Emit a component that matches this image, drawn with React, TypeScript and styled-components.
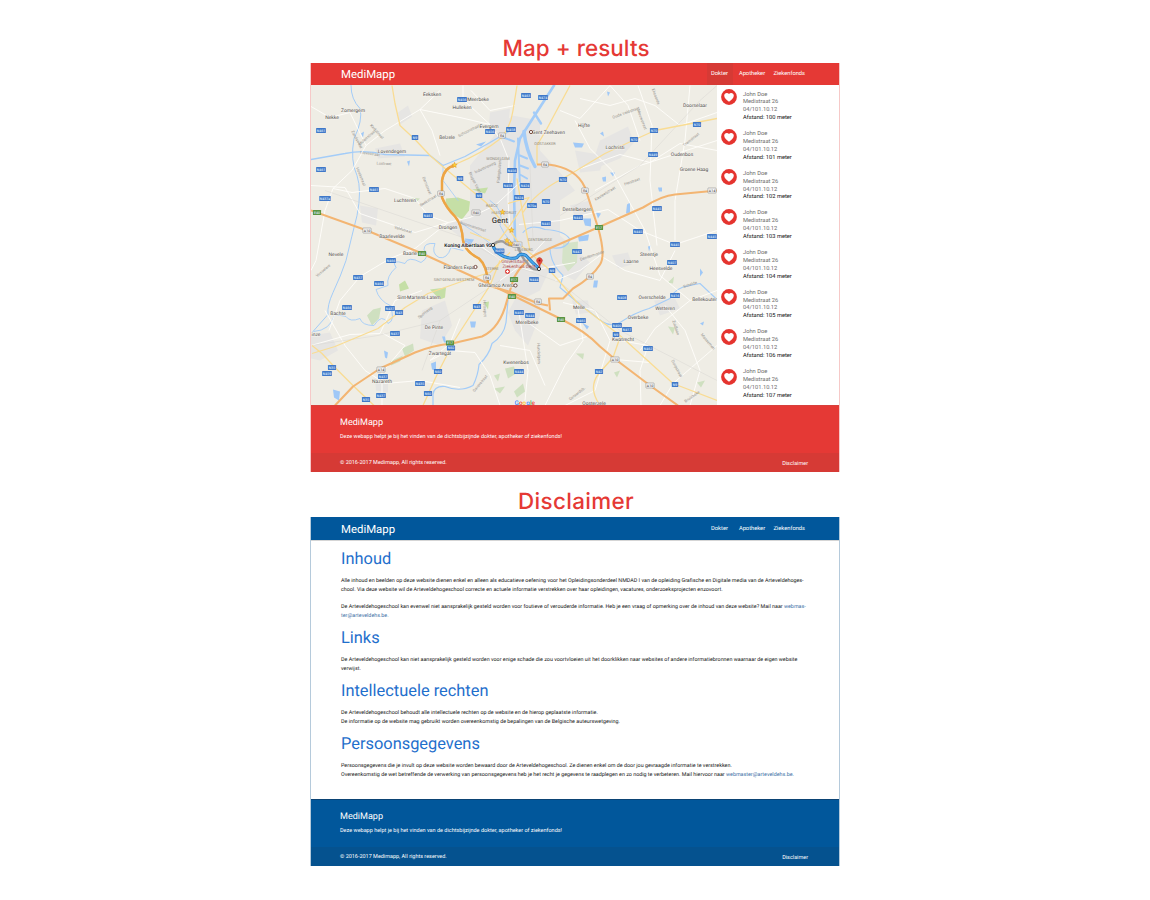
import React from "react";
import styled, { createGlobalStyle, css } from "styled-components";

const Global = createGlobalStyle`
  * { box-sizing: border-box; }
  body { margin: 0; background: #fff; font-family: Roboto, sans-serif; text-rendering: geometricPrecision; }
  h1, h2, h3, p { margin: 0; font-weight: 400; }
`;

const Page = styled.main`
  width: 1150px;
  height: 900px;
  padding: 31px 311px 0;
  overflow: hidden;
`;

const ScreenTitle = styled.h1<{ $tracking: number }>`
  height: 32px;
  padding: 1.5px 0 0 2px;
  text-align: center;
  font: 500 22.4px/32px Inter, sans-serif;
  letter-spacing: ${(p) => p.$tracking}px;
  color: #e53935;
`;

type Tone = "red" | "blue";
const tones = {
  red: { main: "#e53935", dark: "#d63a35", edge: "#f6c9c8" },
  blue: { main: "#01579b", dark: "#05528f", edge: "#b5cadb" },
};

const Screen = styled.section<{ $tone: Tone }>`
  width: 530px;
  margin: 0 0 13px -1px;
  border: 1px solid ${(p) => tones[p.$tone].edge};
  border-top: 0;
  border-bottom: 0;
  display: flex;
  flex-direction: column;
`;

const Header = styled.header<{ $tone: Tone }>`
  height: ${(p) => (p.$tone === "red" ? 21.5 : 23)}px;
  padding: 0 32px 0 30px;
  background: ${(p) => tones[p.$tone].main};
  color: #fff;
  display: flex;
  justify-content: space-between;
  align-items: stretch;
`;

const Brand = styled.span`
  font-size: 11.4px;
  align-self: center;
  padding-top: 1px;
`;

const Nav = styled.nav`
  display: flex;
`;

const NavItem = styled.a<{ $active?: boolean; $width: number }>`
  width: ${(p) => p.$width}px;
  padding-top: 1.4px;
  display: flex;
  align-items: center;
  justify-content: center;
  font-size: 5.75px;
  ${(p) => p.$active && css`background: #d63a35;`}
`;

const MapBody = styled.div`
  height: 320.5px;
  display: flex;
`;

const MapSvg = styled.svg`
  width: 406px;
  height: 320.5px;
  display: block;
  font-family: Roboto, sans-serif;
`;

const Results = styled.aside`
  flex: 1;
  display: flex;
  gap: 6px;
  padding-left: 4px;
`;

const Icons = styled.div`
  display: flex;
  flex-direction: column;
  gap: 24px;
  padding-top: 4.5px;
  svg { width: 16px; height: 16px; display: block; }
`;

const People = styled.ul`
  list-style: none;
  margin: 0;
  padding: 7px 0 0;
  display: flex;
  flex-direction: column;
  gap: 8.3px;
`;

const Person = styled.li`
  height: 31.36px;
  font-size: 5.72px;
  line-height: 7.84px;
  color: #6b6b6b;
  strong { font-weight: 400; color: #111; }
`;

const Footer = styled.footer<{ $tone: Tone }>`
  height: ${(p) => (p.$tone === "red" ? 66.5 : 67)}px;
  background: ${(p) => tones[p.$tone].main};
  color: #fff;
  display: flex;
  flex-direction: column;
  justify-content: space-between;
  border-top: 1px solid ${(p) => (p.$tone === "red" ? "#d8403c" : "#0b4374")};
`;

const FooterIntro = styled.div`
  padding: 11px 29px 0;
  h3 { font-size: 9.05px; line-height: 12px; }
  p { font-size: 5.5px; line-height: 8px; margin-top: 4px; }
`;

const FooterBar = styled.div<{ $tone: Tone }>`
  height: 18.5px;
  padding: 1px 31px 0 29px;
  background: ${(p) => tones[p.$tone].dark};
  display: flex;
  justify-content: space-between;
  align-items: center;
  font-size: 5.47px;
  a { padding-top: 3px; }
`;

const Article = styled.article`
  height: 259px;
  padding: 9.2px 30px 0;
  border-top: 1px solid #d5d5d5;
  h2 { font-size: 16.4px; line-height: 20px; color: #1f6fcc; }
  p { font-size: 5.365px; line-height: 8.8px; color: #151515; white-space: nowrap; margin-top: 7.1px; }
  p + h2 { margin-top: 8.3px; }
  p + p { margin-top: 8.8px; }
  a { color: #3a6ea5; }
`;

type Kind = "b" | "g" | "w";
const shields: [number, number, string, Kind?][] = [
  [462, 99, "N456"], [526, 95, "N463"], [543, 97, "N474"], [321, 130, "N461"], [415, 137, "N9"],
  [490, 131, "N456"], [511, 129, "N458"], [502, 135, "R4", "w"], [545, 164, "R4", "w"], [321, 169, "N461"],
  [460, 178, "N9"], [512, 170, "N456"], [525, 185, "N424"], [508, 185, "N458"], [563, 179, "N70"],
  [374, 189, "N461"], [654, 130, "N70"], [697, 124, "N70"], [634, 139, "N70"], [653, 154, "N449"],
  [712, 190, "A14", "w"], [325, 198, "N437a"], [317, 212, "E40", "g"], [367, 230, "A10", "w"],
  [441, 193, "R4", "w"], [479, 195, "N9"], [476, 212, "R40", "w"], [428, 215, "N461"], [422, 253, "E40", "g"],
  [391, 260, "N466"], [358, 277, "N437"], [379, 283, "N466"], [487, 277, "R4", "w"], [519, 197, "N424"],
  [532, 205, "N70a"], [546, 201, "N70"], [546, 223, "N445"], [578, 217, "N445"], [585, 190, "R4", "w"],
  [599, 227, "E17", "g"], [657, 208, "N445"], [638, 231, "N445"], [675, 244, "N445"], [672, 262, "N407"],
  [577, 251, "N447"], [552, 270, "N9"], [534, 279, "N444"], [590, 276, "R4", "w"],
  [514, 279, "E17", "g"], [712, 236, "N445"], [347, 307, "N466"], [390, 308, "N437"], [399, 312, "N43"],
  [395, 333, "N437"], [477, 306, "N43"], [450, 342.5, "E17", "g"], [451, 347.5, "N60"], [332, 367, "N35"],
  [327, 373, "N459"], [381, 369, "A14", "w"], [383, 376, "N437"], [420, 383, "N435"], [438, 371, "N60"],
  [428, 393, "N60"], [381, 395, "N437"], [366, 399, "N35"], [512, 296, "E40", "g"], [519, 312, "N465"],
  [530, 315, "N444"], [538, 301, "R4", "w"], [561, 319, "E40", "g"], [581, 320, "N465"], [622, 297, "N408"],
  [675, 295, "N416"], [617, 325, "N400"], [627, 329, "N417"], [616, 334, "N9"], [648, 348, "N462"],
  [615, 359, "A10", "w"], [599, 371, "N42"], [650, 385, "A10", "w"], [675, 384, "N9"], [519, 371, "N444"],
];

const towns: [number, number, string][] = [
  [432, 94, "Eeksken"], [478, 99, "Meerbeke"], [462, 107, "Hulleken"], [353, 110, "Zomergem"], [332, 117, "Nekke"],
  [489, 125.5, "Evergem"], [447, 136.5, "Belzele"], [392, 150.5, "Lovendegem"], [548.5, 131.5, "Gent Zeehaven"],
  [695, 104.5, "Doorselaar"], [584, 124.5, "Hijfte"], [615, 146.5, "Lochristi"], [682, 154, "Oudenbos"], [694, 169, "Groene Haag"],
  [405, 200, "Luchteren"], [448, 227, "Drongen"], [392, 235.5, "Baarlevelde"], [410, 252.5, "Baarle"],
  [336, 254, "Nevele"], [459, 266.5, "Flanders Expo"], [496.5, 285, "Ghelamco Arena"], [577, 209, "Destelbergen"],
  [649, 254, "Steentje"], [631, 261, "Laarne"], [661, 268, "Heesvelde"], [338, 313, "Bachte"],
  [419, 297, "Sint-Martens-Latem"], [434, 326.5, "De Pinte"], [316, 333.5, "inze"], [440, 352.5, "Zwartegat"],
  [382, 380.5, "Nazareth"], [579, 306.5, "Melle"], [527, 321.5, "Merelbeke"], [652, 296.5, "Overschelde"], [665, 307.5, "Wetteren"],
  [704.5, 299, "Bellekouter"], [638, 317, "Overbeke"], [623, 339, "Kwatrecht"], [516, 362, "Kwenenbos"], [594, 402.4, "Oosterzele"],
];

const streets: [number, number, string, number][] = [
  [367, 137, "Molenstraat", -42], [357, 139, "Zandstraat", 62], [377, 131, "Kerkstraat", 48], [370, 153, "Lievestraat", 8],
  [384, 163, "Lostraat", 3], [361, 176, "Hoekstraat", 68], [469, 130, "Schoonstraat", -27], [485, 167, "Industrieweg", -25],
  [499, 171, "Palinghuizen", -86], [475, 182, "Brugse Vaart", 64], [427, 185, "Damstraat", 68], [428, 200, "Beekstraat", -32],
  [403, 229, "Veldstraat", 17], [473, 226, "Noormanstraat", 18], [626, 112, "Oude Veldstraat", -20], [642, 119, "Nieuwstraat", 70],
  [691, 139, "Tramstraat", -39], [632, 181, "Heistraat", -20], [605, 193, "Kasteelstraat", -32], [323, 270, "Vosselare", -40],
  [425, 312, "Sportweg", -38], [485, 308, "Hutsepot", 88], [480, 383, "Gaverstraat", -50], [539, 353, "Hundelgem", 88],
  [676, 327, "Zuidlaan", 72], [708, 341, "Massemen", 50], [677, 368, "Dorpstraat", 62], [577, 393, "Geraardsb.", -38],
  [692, 396, "Bruisbeke", -35], [592, 255, "Dendermonde", -18], [656, 96, "Eksaarde", 70], [690, 284, "Schelde", -18],
];

const districts: [number, number, string][] = [
  [498, 158, "WONDELGEM"], [545, 143, "OOSTAKKER"], [492, 205, "RABOT"], [504, 212, "HUIS VOORUIT"], [540, 239, "GENTBRUGGE"],
  [492, 268, "STERRE"], [454, 279, "SINT-DENIJS-WESTREM"], [524, 249, "LEDEBERG"],
];

const minorRoads = [
  "M311 106 L330 117 L350 112 L366 145 L352 170 L333 188 L325 210 L316 260 L311 270",
  "M366 145 L385 130 L420 109 L440 90 M420 109 L432 130 L440 155",
  "M333 188 L352 192 L385 188 L415 198 L428 215 L448 222 L470 217 L495 205 L520 182",
  "M448 222 L415 248 L390 258 L360 276 L340 300 L329 330",
  "M463 85 L463 99 L490 124 L501 140 L509 160 L508 200 L510 230",
  "M311 185 L345 187 L360 213 L415 232 L448 222",
  "M311 345 L350 334 L380 333 L395 300 L422 290",
  "M325 310 L345 345 L365 370 L385 383 L420 380 L460 387",
  "M383 333 L405 345 L382 372 L382 405 M430 360 L450 350 L475 352 L490 375 L500 405",
  "M580 98 L610 105 L635 98 L655 105 L680 125 L717 112",
  "M575 170 L620 154 L650 162 L680 143 L717 150",
  "M575 120 L590 148 L612 170 L645 230 L660 275 L690 300",
  "M638 85 L652 125 L650 180 L657 245",
  "M610 85 L628 105 L640 140 M690 85 L685 140 L675 200 L675 240",
  "M519 224 L560 220 L608 209 L640 230 L675 244 L708 233 L717 230",
  "M555 280 L580 270 L600 255 L625 270 L660 280 L675 250",
  "M563 302 L595 310 L610 340 L595 390 L565 405",
  "M577 302 L583 340 L565 365 L545 405 M519 312 L528 370 L525 400",
  "M620 340 L648 345 L640 370 L641 405 M665 305 L685 330 L700 370 L690 405",
  "M640 350 L655 328 L690 300 L717 290 M673 383 L717 345",
  "M500 345 L530 350 L545 385 M460 318 L450 343 L430 360",
  "M615 359 L650 362 L673 383 L660 405 M525 320 L560 345 L590 335",
  "M471 90 L490 110 L515 105 M420 109 L460 117 L490 124",
  "M480 245 L505 263 L530 270 L575 262 M500 280 L525 262 L545 240",
  "M595 190 L640 165 L717 140 M560 110 L580 118 L610 85",
];

const yellowRoads = [
  "M392 85 L395 103 L400 125 L415 139 L430 155 L445 168 L486 202 L508 228",
  "M455 164 Q482 153 502 137 Q511 125 513 110 L517 85",
  "M570 85 L547 128 L537 145 L537 164 M508 203 L529 197 L508 228",
  "M523 212 Q535 192 563 178 L605 153 L635 139 L655 130 L717 118",
  "M312 353 L335 346 L378 328 L405 307 L428 293 L470 278 L490 272 L510 252",
  "M312 345 L322 353 L335 367 L353 385 L374 405",
  "M423 405 L438 372 L455 339 L477 305 L490 285 L500 260",
  "M508 228 L520 244 L548 268 L563 285 L577 302 L620 335 L673 383 L717 400",
  "M620 337 L613 357 L598 374 Q588 388 600 405",
  "M508 228 L495 245 M517 178 L523 215 L530 250 M470 232 L490 240",
];

const orangeRoads = [
  "M455 165 Q444 167 442 180 L442 197 Q446 207 455 216 Q462 224 463 240 Q465 251 479 258 Q487 265 488 283",
  "M311 210 L367 230 L422 253 L488 283 L517 297 L560 318 Q586 331 600 346 L613 357 L650 385 L678 405",
  "M335 405 L353 386 L380 368 L415 352 Q432 345 452 343 L482 336 Q500 328 507 300 L514 277 Q525 258 540 252 L598 227 L643 207 Q662 195 675 194 L717 190",
  "M537 164 L548 164 Q576 167 585 187 L598 227 Q606 255 600 264 Q592 277 573 288 L563 298 L549 298 L550 310",
  "M488 285 L512 292 L538 303 L548 305",
];

const Marker = ({ x, y, label, kind = "b" }: { x: number; y: number; label: string; kind?: Kind }) => {
  const w = label.length * 1.65 + 3.2;
  const fill = kind === "b" ? "#3f78c9" : kind === "g" ? "#5a9440" : "#fbfbfb";
  return (
    <g>
      <rect x={x - w / 2} y={y - 2.5} width={w} height={5} rx={0.5} fill={fill} stroke={kind === "w" ? "#8d8d8d" : "none"} strokeWidth={0.6} />
      <text x={x} y={y + 1.3} fontSize={3.5} fontWeight={500} textAnchor="middle" fill={kind === "w" ? "#555" : "#d8e5f8"}>{label}</text>
    </g>
  );
};

const Star = ({ x, y }: { x: number; y: number }) => (
  <path transform={`translate(${x} ${y})`} d="M0-2.7 .8-.8 2.7-.7 1.2.6 1.7 2.5 0 1.4-1.7 2.5-1.2.6-2.7-.7-.8-.8Z" fill="#fbd335" stroke="#dd8f26" strokeWidth={0.5} />
);

const Dot = ({ x, y, color }: { x: number; y: number; color: string }) => (
  <circle cx={x} cy={y} r={1.6} fill="#fff" stroke={color} strokeWidth={1} />
);

const CityMap = () => (
  <MapSvg viewBox="311 84.5 406 320.5" preserveAspectRatio="none">
    <rect x={311} y={84} width={406} height={322} fill="#efede5" />
    <g fill="#e6e5e3">
      <path d="M470 165 L500 128 L512 115 L540 120 L540 150 L560 172 L575 190 L560 200 L560 235 L590 262 L575 280 L550 268 L540 290 L520 300 L495 285 L480 262 L465 240 L445 225 L470 215 Z" />
      <path d="M517 295 L540 300 L540 315 L528 345 L515 330 L508 312Z" />
      <path d="M600 140 L628 126 L634 142 L620 158 L590 170Z M575 150 L605 155 L600 170 L580 172Z" />
      <path d="M398 112 L408 105 L412 116 L400 124Z M490 112 L510 108 L508 126 L488 134Z M375 148 L400 143 L405 156 L378 158Z" />
      <path d="M422 310 L445 300 L452 325 L440 345 L420 338Z M311 335 L330 332 L338 350 L320 360 L311 358Z" />
      <path d="M375 378 L388 378 L388 392 L376 390Z M654 300 L675 298 L680 308 L660 315Z M360 205 L378 208 L376 225 L362 222Z" />
      <path d="M572 300 L588 300 L590 312 L576 314Z M612 255 L628 252 L632 264 L618 268Z M570 205 L590 200 L592 212 L575 216Z" />
    </g>
    <g fill="#c5dfa6">
      <path d="M446 198 L458 197 L470 201 L469 210 L462 219 L452 213 L445 205Z" />
      <path d="M563 243 L578 241 L577 262 L568 271 L562 262Z" fill="#d5e3c8" />
      <path d="M373 309 L381 307 L379 318 L372 325 L367 315Z M402 348 L413 343 L414 350 L405 356Z" fill="#cfe0c0" />
      <path d="M399 284 L405 280 L409 288 L400 291Z M430 289 L446 287 L445 297 L440 299Z M472 189 L488 187 L485 193Z M484 302 L489 301 L488 309Z" />
      <path d="M390 361 L403 355 L400 361 L391 365Z M494 375 L500 373 L498 381Z M505 368 L514 366 L516 373 L508 378Z M494 388 L505 386 L500 393Z M514 391 L523 383 L525 391 L517 397Z" fill="#cfe0c0" />
      <path d="M668 326 L675 327 L673 334Z M576 353 L584 353 L583 359Z M614 372 L620 370 L617 377Z M411 197 L420 198 L417 201Z M668 282 L674 276 L673 283Z M697 382 L705 380 L701 387Z" fill="#cfe0c0" />
    </g>
    <g fill="none" stroke="#a3ccf8" strokeLinejoin="round" strokeLinecap="round">
      <path d="M351 85 Q351 99 360 108 Q363 120 354 138 Q350 160 357 175 Q362 190 357 215 Q352 235 346 260 Q341 275 333 292 Q327 305 328 314 L313 331" strokeWidth={1} />
      <path d="M311 159 L345 153 Q365 149 385 154 L430 155 L443 165 L465 156 L490 142 L512 129" strokeWidth={1.3} />
      <path d="M554 85 L534 116 L520 138 L515 160 L514 190 L515 240" strokeWidth={2.6} />
      <path d="M524 131 Q526 150 535 166" strokeWidth={3.4} />
      <path d="M534 112 L541 123" strokeWidth={2.4} />
      <path d="M518 138 L520 185 M520 155 L527 158 M520 165 L528 168 M520 174 L527 178 M501 136 L514 141" strokeWidth={2} />
      <path d="M443 165 L443 180 L458 200 M460 222 L480 235 L490 243" strokeWidth={0.8} />
      <path d="M463 250 L451 247 Q447 259 439 257 Q431 253 435 243 Q424 242 424 249 Q431 256 421 262 Q408 255 405 263 Q390 258 396 267 Q386 276 388 285 L376 289 Q379 300 390 305" strokeWidth={0.9} />
      <path d="M390 305 Q396 320 388 323 Q382 312 374 325 Q362 325 360 318 Q350 322 346 316 L335 314 Q330 330 314 331" strokeWidth={0.9} />
      <path d="M433 405 L433 394 Q434 385 445 386 Q460 392 473 385 Q478 375 479 364 Q489 355 492 343 Q504 335 506 322 L508 300" strokeWidth={1.2} />
      <path d="M523 232 Q530 223 545 229 Q565 230 570 239 Q566 250 550 247 Q550 263 563 275 L560 287 L574 299 L602 321 Q612 327 620 322 Q635 312 649 308 L670 298 Q675 287 690 285 L700 283 L717 299" strokeWidth={1.1} />
      <path d="M520 248 Q508 242 500 225 Q505 210 490 200" strokeWidth={0.9} />
    </g>
    <g fill="#9fc8f7">
      <path d="M361 133 L364 131 L363 137Z M407 161 L410 160 L409 166Z M573 142 L584 143 L582 147 L575 147Z M600 133 L603 131 L604 136Z" />
      <path d="M578 236 L589 234 L588 240 L579 241Z M583 218 L591 218 L591 226 L585 225Z M596 212 L601 213 L598 218Z M627 204 L630 202 L630 212 L626 213Z M602 177 L606 176 L606 181 L603 181Z M658 187 L662 187 L662 191 L659 191Z" />
      <path d="M594 280 L598 280 L597 287 L593 287Z M582 322 L589 326 L587 329Z M648 246 L651 245 L649 251Z M470 321 L476 321 L475 327 L471 327Z M442 336 L445 336 L446 342 L444 342Z" />
      <path d="M333 389 L340 391 L339 400 L334 397Z M384 350 L388 352 L387 358 L385 357Z M431 363 L436 361 L436 370 L432 369Z M610 172 L615 172 L613 176Z M465 238 L474 239 L470 245 L464 243Z" />
      <path d="M700 268 L703 272 L700 276Z M700 323 L704 321 L703 325Z M607 91 L610 92 L608 96Z M476 144 L486 141 L481 146Z" />
    </g>
    <g fill="none" stroke="#fffefa" strokeWidth={0.9} strokeLinejoin="round">{minorRoads.map((d) => <path key={d} d={d} />)}</g>
    <g fill="none" stroke="#d9d7d2" strokeWidth={0.5}>
      <path d="M325 190 L460 236 L505 262 L560 282 L620 330 L717 380 M311 345 L378 335 L440 320 L500 280 M440 320 L422 370" />
      <path d="M717 85 L700 100 L640 165 L560 215 M530 165 L533 240" />
    </g>
    <g fill="none" stroke="#f9dc93" strokeWidth={1.3} strokeLinejoin="round">{yellowRoads.map((d) => <path key={d} d={d} />)}</g>
    <g fill="none" stroke="#f3b572" strokeWidth={2.1} strokeLinejoin="round">{orangeRoads.map((d) => <path key={d} d={d} />)}</g>
    <path d={orangeRoads[0]} fill="none" stroke="#eda544" strokeWidth={2.4} />
    <g fontSize={4} fill="#96938e" textAnchor="middle">
      {streets.map(([x, y, t, r]) => <text key={`${x}-${y}`} transform={`translate(${x} ${y}) rotate(${r})`} y={1.4}>{t}</text>)}
    </g>
    <g fontSize={3.8} fill="#8d8578" textAnchor="middle">
      {districts.map(([x, y, t]) => <text key={t} x={x} y={y + 1.4}>{t}</text>)}
    </g>
    <g fontSize={4.95} fill="#4f4d4a" textAnchor="middle" stroke="#f6f4ef" strokeWidth={0.8} paintOrder="stroke">
      {towns.map(([x, y, t]) => <text key={t} x={x} y={y + 1.7}>{t}</text>)}
      <text x={500} y={222.3} fontSize={7.8} fill="#3c3c3c" fontWeight={500}>Gent</text>
    </g>
    {shields.map(([x, y, l, k]) => <Marker key={`${x}-${y}`} x={x} y={y} label={l} kind={k} />)}
    <g fill="none" strokeLinejoin="round" strokeLinecap="round">
      <path d="M493 244 Q498 240 503 241 Q508 246 518 246 Q522 258 527 262 Q531 270 538 269" stroke="#9d9d9d" strokeWidth={2.4} />
      <path d="M493 245 Q495 252 504 256 Q512 259 517 257 Q520 252 526 255 Q532 262 539 268" stroke="#1d74bf" strokeWidth={3.1} />
      <path d="M493 245 Q495 252 504 256 Q512 259 517 257 Q520 252 526 255 Q532 262 539 268" stroke="#4aa7ec" strokeWidth={1.8} strokeDasharray="3 1.2" />
    </g>
    <Marker x={517} y={244} label="R401" kind="w" />
    <text x={468} y={246.2} fontSize={5} fontWeight={700} fill="#222" textAnchor="middle" stroke="#fff" strokeWidth={0.8} paintOrder="stroke">Koning Albertlaan 95</text>
    <Marker x={499.5} y={250.5} label="N430" />
    <g fontSize={4.6} fill="#ae4b4b" textAnchor="middle">
      <text x={513} y={262}>Universitair</text>
      <text x={519} y={267}>Ziekenhuis Gent</text>
    </g>
    <Dot x={493} y={244.5} color="#333" />
    <Dot x={539} y={268.5} color="#333" />
    <Dot x={531} y={131.5} color="#73483f" />
    <Dot x={475.5} y={266.5} color="#73483f" />
    <Dot x={515.5} y={285} color="#73483f" />
    <circle cx={507.5} cy={271} r={2.5} fill="#e04a45" />
    <path d="M506 271h3M507.5 269.5v3" stroke="#fff" strokeWidth={0.9} />
    <path d="M539.5 267 Q539 264 537.2 261.8 A2.9 2.9 0 1 1 541.8 261.8 Q540 264 539.5 267Z" fill="#e3463c" stroke="#a52714" strokeWidth={0.4} />
    <circle cx={539.5} cy={260} r={0.9} fill="#7d1512" />
    <Star x={454.5} y={164.5} /><Star x={502.5} y={211.5} /><Star x={511.5} y={229.5} /><Star x={507} y={240} /><Star x={510.5} y={243} />
    <text x={514.5} y={404.2} fontSize={6.4} fontWeight={500} stroke="#fff" strokeWidth={0.4} paintOrder="stroke" textLength={20.5}><tspan fill="#4285f4">G</tspan><tspan fill="#ea4335">o</tspan><tspan fill="#fbbc05">o</tspan><tspan fill="#4285f4">g</tspan><tspan fill="#34a853">l</tspan><tspan fill="#ea4335">e</tspan></text>
  </MapSvg>
);

const HeartBadge = () => (
  <svg viewBox="0 0 16 16">
    <circle cx={8} cy={8} r={7.9} fill="#e5342f" />
    <path d="M8 12.8 C5.2 10.6 3.2 9 3.2 6.6 C3.2 5 4.4 3.9 5.8 3.9 C6.7 3.9 7.5 4.3 8 5.1 C8.5 4.3 9.3 3.9 10.2 3.9 C11.6 3.9 12.8 5 12.8 6.6 C12.8 9 10.8 10.6 8 12.8Z" fill="#fff" />
  </svg>
);

const TopBar = ({ tone }: { tone: Tone }) => (
  <Header $tone={tone}>
    <Brand>MediMapp</Brand>
    <Nav>
      <NavItem $active={tone === "red"} $width={26}>Dokter</NavItem>
      <NavItem $width={39}>Apotheker</NavItem>
      <NavItem $width={35.5}>Ziekenfonds</NavItem>
    </Nav>
  </Header>
);

const BottomBar = ({ tone }: { tone: Tone }) => (
  <Footer $tone={tone}>
    <FooterIntro>
      <h3>MediMapp</h3>
      <p>Deze webapp helpt je bij het vinden van de dichtsbijzijnde dokter, apotheker of ziekenfonds!</p>
    </FooterIntro>
    <FooterBar $tone={tone}>
      <span>© 2016-2017 Medimapp, All rights reserved.</span>
      <a>Disclaimer</a>
    </FooterBar>
  </Footer>
);

const distances = [100, 101, 102, 103, 104, 105, 106, 107];

export default function App() {
  return (
    <>
      <Global />
      <Page>
        <ScreenTitle $tracking={0.06}>Map + results</ScreenTitle>
        <Screen $tone="red">
          <TopBar tone="red" />
          <MapBody>
            <CityMap />
            <Results>
              <Icons>{distances.map((d) => <HeartBadge key={d} />)}</Icons>
              <People>
                {distances.map((d) => (
                  <Person key={d}>
                    John Doe<br />Medistraat 26<br />04/101.10.12<br /><strong>Afstand: {d} meter</strong>
                  </Person>
                ))}
              </People>
            </Results>
          </MapBody>
          <BottomBar tone="red" />
        </Screen>
        <ScreenTitle $tracking={0.35}>Disclaimer</ScreenTitle>
        <Screen $tone="blue">
          <TopBar tone="blue" />
          <Article>
            <h2>Inhoud</h2>
            <p>Alle inhoud en beelden op deze website dienen enkel en alleen als educatieve oefening voor het Opleidingsonderdeel NMDAD I van de opleiding Grafische en Digitale media van de Arteveldehoges-<br />chool. Via deze website wil de Arteveldehogeschool correcte en actuele informatie verstrekken over haar opleidingen, vacatures, onderzoeksprojecten enzovoort.</p>
            <p>De Arteveldehogeschool kan evenwel niet aansprakelijk gesteld worden voor foutieve of verouderde informatie. Heb je een vraag of opmerking over de inhoud van deze website? Mail naar <a>webmas-<br />ter@arteveldehs.be.</a></p>
            <h2>Links</h2>
            <p>De Arteveldehogeschool kan niet aansprakelijk gesteld worden voor enige schade die zou voortvloeien uit het doorklikken naar websites of andere informatiebronnen waarnaar de eigen website<br />verwijst.</p>
            <h2>Intellectuele rechten</h2>
            <p>De Arteveldehogeschool behoudt alle intellectuele rechten op de website en de hierop geplaatste informatie.<br />De informatie op de website mag gebruikt worden overeenkomstig de bepalingen van de Belgische auteurswetgeving.</p>
            <h2>Persoonsgegevens</h2>
            <p>Persoonsgegevens die je invult op deze website worden bewaard door de Arteveldehogeschool. Ze dienen enkel om de door jou gevraagde informatie te verstrekken.<br />Overeenkomstig de wet betreffende de verwerking van persoonsgegevens heb je het recht je gegevens te raadplegen en zo nodig te verbeteren. Mail hiervoor naar <a>webmaster@arteveldehs.be.</a></p>
          </Article>
          <BottomBar tone="blue" />
        </Screen>
      </Page>
    </>
  );
}
